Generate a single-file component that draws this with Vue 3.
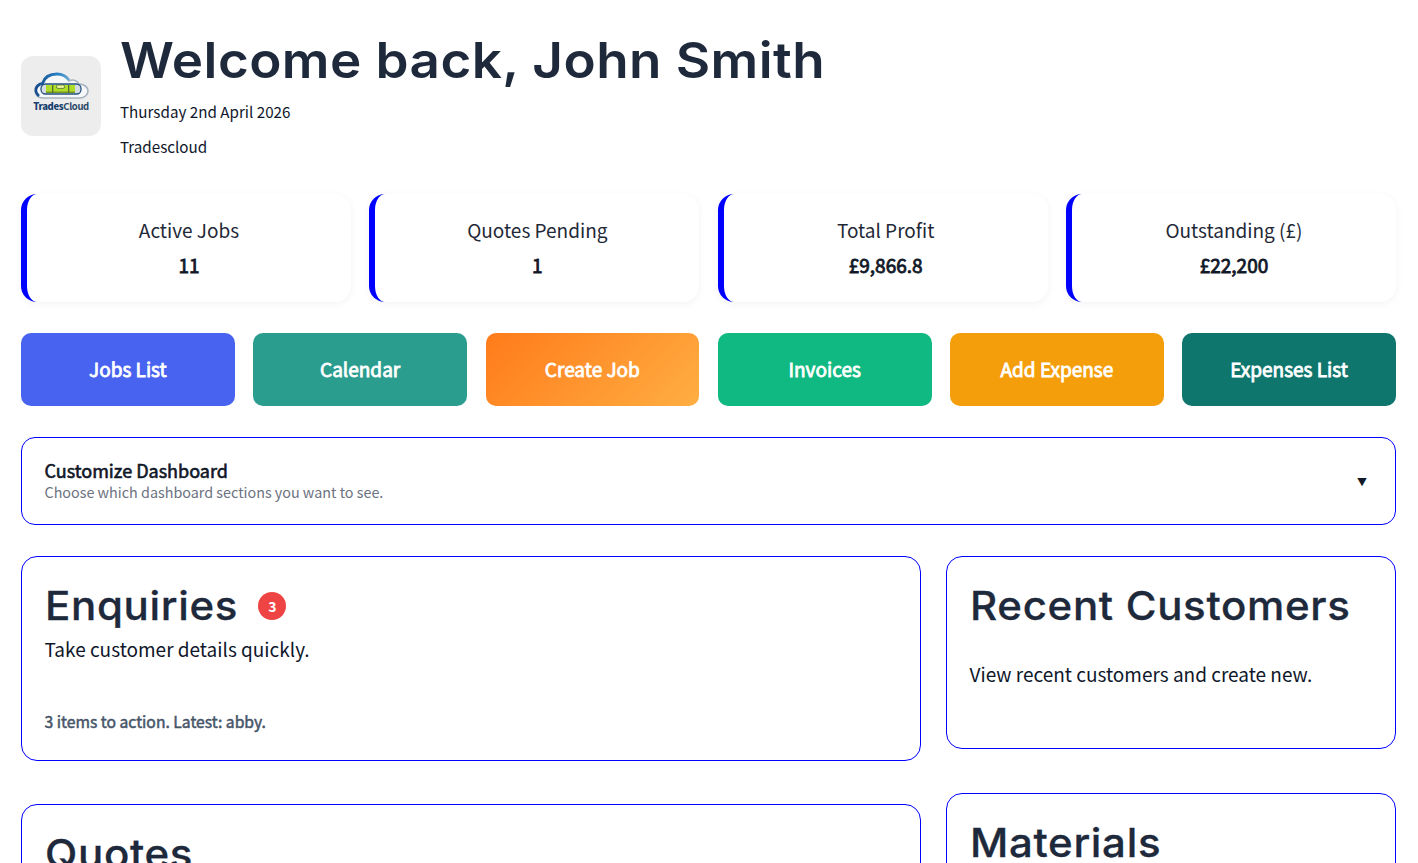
<script setup>
const stats = [
  { label: 'Active Jobs', value: '11' },
  { label: 'Quotes Pending', value: '1' },
  { label: 'Total Profit', value: '£9,866.8' },
  { label: 'Outstanding (£)', value: '£22,200' }
]
const actions = [
  { label: 'Jobs List', cls: 'a-blue' },
  { label: 'Calendar', cls: 'a-teal' },
  { label: 'Create Job', cls: 'a-orange' },
  { label: 'Invoices', cls: 'a-green' },
  { label: 'Add Expense', cls: 'a-amber' },
  { label: 'Expenses List', cls: 'a-dark' }
]
</script>

<template>
  <div class="page">
    <header class="head">
      <div class="logo">
        <svg class="logo-art" viewBox="0 0 57 28" width="57" height="28" aria-hidden="true">
          <defs>
            <linearGradient id="arc" x1="0" y1="0" x2="1" y2="0">
              <stop offset="0" stop-color="#174a8c" />
              <stop offset="0.7" stop-color="#2a86c8" />
              <stop offset="1" stop-color="#6fa8d0" />
            </linearGradient>
          </defs>
          <path d="M10 26C4 26 2 22 2 18C2 14 5 11.500 9 11.500C11 5 17 2 24 2C30 2 34 5 36 9C39 7 44 8 46 12C51 12 55 15 55 19C55 23 51 26 47 26Z" fill="#f6f8fa" stroke="#a7b4c0" stroke-width="1.600" />
          <path d="M6 24C2.500 21 2 17 4.500 14C6 12.500 8 11.500 9.500 11.500C11.500 5 17 2 24 2C29 2 33 4 36 8" fill="none" stroke="url(#arc)" stroke-width="2.800" />
          <rect x="8" y="12" width="40" height="10" rx="4.500" fill="#d5dce3" stroke="#24527f" stroke-width="1.300" />
          <rect x="13" y="13" width="29" height="8" fill="#aede2a" />
          <rect x="13" y="19.500" width="29" height="1.500" fill="#769a1d" />
          <rect x="23.500" y="13" width="8" height="3.400" rx="1.400" fill="#ecf79b" stroke="#4f6b25" stroke-width="0.800" />
          <rect x="19" y="13" width="1.300" height="8" fill="#55702a" />
          <rect x="35" y="13" width="1.300" height="8" fill="#55702a" />
        </svg>
        <span class="logo-text"><b>Trades</b>Cloud</span>
      </div>
      <div class="head-text">
        <h1><span class="wide">Welcome back, John Smith</span></h1>
        <p class="date">Thursday 2nd April 2026</p>
        <p class="org">Tradescloud</p>
      </div>
    </header>

    <section class="stats">
      <div v-for="s in stats" :key="s.label" class="stat">
        <div class="stat-label">{{ s.label }}</div>
        <div class="stat-value">{{ s.value }}</div>
      </div>
    </section>

    <section class="actions">
      <a v-for="a in actions" :key="a.label" class="action" :class="a.cls">{{ a.label }}</a>
    </section>

    <section class="customize">
      <div>
        <div class="cust-title">Customize Dashboard</div>
        <div class="cust-sub">Choose which dashboard sections you want to see.</div>
      </div>
      <span class="caret">▼</span>
    </section>

    <main class="grid">
      <div class="col">
        <article class="card card-enq">
          <h2><span class="wide">Enquiries</span> <span class="badge">3</span></h2>
          <p class="desc">Take customer details quickly.</p>
          <p class="note">3 items to action. Latest: abby.</p>
        </article>
        <article class="card card-q">
          <h2><span class="wide">Quotes</span></h2>
        </article>
      </div>
      <div class="col col-right">
        <article class="card card-rc">
          <h2><span class="wide">Recent Customers</span></h2>
          <p class="desc desc-rc">View recent customers and create new.</p>
        </article>
        <article class="card card-m">
          <h2><span class="wide">Materials</span></h2>
        </article>
      </div>
    </main>
  </div>
</template>

<style>
html, body { margin: 0; height: 100%; overflow: hidden; background: #fff; }
</style>

<style scoped>
.page {
  box-sizing: border-box;
  width: 1418px;
  height: 863px;
  overflow: hidden;
  padding: 30px 22px 0 21px;
  font-family: "Noto Sans CJK SC", "Noto Sans", sans-serif;
  color: #0f172a;
}
.head { display: flex; align-items: flex-start; gap: 19px; }
.logo {
  width: 80px; height: 80px; border-radius: 12px; background: #ededee;
  display: flex; flex-direction: column; align-items: center;
  margin-top: 26px; padding-top: 16px; box-sizing: border-box;
}
.logo-art { display: block; }
.logo-text {
  font-size: 9.5px; font-weight: 700;
  color: #2c4766; letter-spacing: -0.35px; line-height: 11px; margin-top: 1px;
}
.logo-text b { color: #173e6e; }
.wide { display: inline-block; transform-origin: left center; white-space: nowrap; }
h1 {
  margin: 0; font-family: Inter, sans-serif; font-weight: 600; font-size: 50px;
  line-height: 60px; color: #1e293b; letter-spacing: 0.4px;
}
h1 .wide { transform: scaleX(1.06); }
.date, .org { margin: 0; font-size: 15.2px; line-height: 23px; color: #0f172a; }
.date { margin-top: 10px; }
.org { margin-top: 12px; }

.stats { display: grid; grid-template-columns: repeat(4, 1fr); gap: 18.3px; margin-top: 36px; }
.stat {
  box-sizing: border-box; height: 108px; background: #fff; border-left: 6px solid #00f; border-radius: 16px;
  box-shadow: 0 2px 8px rgba(0,0,0,0.05);
  display: flex; flex-direction: column; align-items: center; padding-top: 21px;
}
.stat-label { font-size: 19px; line-height: 29px; color: #1f2937; }
.stat-value { font-size: 19px; line-height: 29px; margin-top: 6px; color: #111827; -webkit-text-stroke: 0.8px #111827; }

.actions { display: grid; grid-template-columns: repeat(6, 1fr); gap: 18.5px; margin-top: 31px; }
.action {
  box-sizing: border-box; height: 73px; padding-bottom: 2px; border-radius: 10px; color: #fff; font-size: 19px;
  -webkit-text-stroke: 0.8px #fff;
  display: flex; align-items: center; justify-content: center;
}
.a-blue { background: #4763f0; }
.a-teal { background: #2a9d8f; }
.a-orange { background: linear-gradient(135deg, #ff7b1a, #ffae42); }
.a-green { background: #10b981; }
.a-amber { background: #f59e0b; }
.a-dark { background: #0f766e; }

.customize {
  box-sizing: border-box; height: 88px; margin-top: 31px; border: 1px solid #00f; border-radius: 14px;
  display: flex; align-items: center; justify-content: space-between; padding: 0 28px 3px 22.5px; background: #fff;
}
.cust-title { font-size: 18px; line-height: 22px; color: #111827; -webkit-text-stroke: 0.6px #111827; }
.cust-sub { font-size: 14.35px; line-height: 18px; margin-top: 2px; color: #6b7280; }
.caret { font-size: 10px; color: #111827; margin-top: 3px; }

.grid { display: grid; grid-template-columns: 900px 450px; gap: 25px; margin-top: 31px; }
.col { display: flex; flex-direction: column; gap: 43px; }
.col-right { gap: 44px; }
.card { box-sizing: border-box; border: 1px solid #00f; border-radius: 16px; background: #fff; padding: 24px 22.5px 23px; }
.card-enq { height: 205px; }
.card-rc { height: 193px; }
.card-q, .card-m { height: 200px; }
h2 {
  margin: 0; font-family: Inter, sans-serif; font-weight: 500; font-size: 40px; line-height: 50px;
  color: #1e293b; display: flex; align-items: center; gap: 30px; letter-spacing: 0.64px;
  -webkit-text-stroke: 0.3px #1e293b;
}
h2 .wide { transform: scaleX(1.05); }
.badge {
  width: 28px; height: 28px; border-radius: 50%; background: #ef4444; color: #fff;
  font-size: 14px; font-weight: 700; display: flex; align-items: center; justify-content: center; letter-spacing: 0;
  font-family: "Noto Sans CJK SC", sans-serif; -webkit-text-stroke: 0;
}
.desc { margin: 3px 0 0; font-size: 19px; line-height: 29px; color: #0f172a; }
.desc-rc { margin-top: 28px; }
.note { margin: 47px 0 0; font-size: 15.7px; line-height: 23px; color: #475569; -webkit-text-stroke: 0.5px #475569; }
</style>
